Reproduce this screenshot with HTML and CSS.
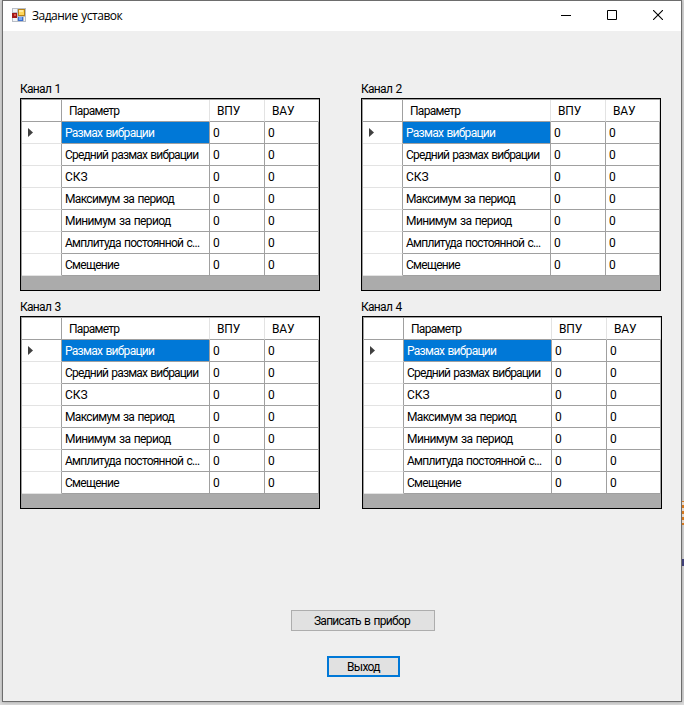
FILE: index.html
```
<!DOCTYPE html>
<html lang="ru">
<head>
<meta charset="utf-8">
<title>Задание уставок</title>
<link rel="stylesheet" href="styles.css">
</head>
<body>
<div class="window">
  <header class="titlebar">
    <svg class="app-icon" width="14" height="14" viewBox="0 0 14 14" shape-rendering="crispEdges">
      <path fill="#b9bec6" d="M0 0h14v14H0z"/>
      <path fill="#f2f4f7" d="M1 1h4v3H1zM1 10h4v3H1zM12 9h1v4h-1z"/>
      <path fill="#a01818" d="M0 5h5v5H0z"/><path fill="#e05a4a" d="M2 6h2v2H2z"/>
      <path fill="#b58218" d="M6 1h7v7H6z"/><path fill="#ffd65a" d="M7 2h5v5H7z"/><path fill="#ffeaa0" d="M7 2h4v2H7z"/>
      <path fill="#3a6fd0" d="M6 9h5v4H6z"/><path fill="#78a8f5" d="M7 9h3v3H7z"/>
    </svg>
    <h1 class="title">Задание уставок</h1>
    <div class="controls">
      <svg width="10" height="10" viewBox="0 0 10 10" shape-rendering="crispEdges"><path d="M0 5h10v1H0z"/></svg>
      <svg width="10" height="10" viewBox="0 0 10 10" fill="none" stroke="#000"><path d="M.5 .5h9v9h-9z"/></svg>
      <svg width="10" height="10" viewBox="0 0 10 10" fill="none" stroke="#000" stroke-width="1.1"><path d="M0 0l10 10M10 0L0 10"/></svg>
    </div>
  </header>
  <main class="client">
    <div class="channels" id="channels"></div>
    <div class="actions">
      <button class="btn write">Записать в прибор</button>
      <button class="btn exit">Выход</button>
    </div>
  </main>
</div>
<div class="backdrop-edge"><i class="orange"></i><i class="navy"></i></div>
<script src="app.js"></script>
</body>
</html>
```
FILE: styles.css
```
* { box-sizing: border-box; }
body { margin: 0; width: 684px; height: 705px; overflow: hidden; position: relative; padding-left: 2px; background: #dcdcdc; font: 12px/14px Roboto, "Liberation Sans", sans-serif; letter-spacing: -.72px; word-spacing: 1px; color: #000; }
.window { width: 680px; height: 702px; background: #efefef; border: 1px solid #6d6d6d; box-shadow: 0 0 4px rgba(0,0,0,.3); position: relative; }
.titlebar { height: 30px; background: #fff; display: flex; align-items: center; padding: 0 18px 0 9px; }
.app-icon { margin-top: -2px; }
.title { margin: 0 0 0 6px; font: 12px/16px "Open Sans", sans-serif; letter-spacing: -.5px; }
.controls { margin-left: auto; display: flex; gap: 36px; margin-top: -2px; }
.controls svg { display: block; }
.client { padding: 51px 0 0 17px; }
.channels { display: grid; grid-template-columns: 341px 301px; grid-template-rows: 218px 218px; }
.label { margin: 0; height: 16px; font-size: 12px; font-weight: 400; line-height: 14px; letter-spacing: -.7px; }
.grid { width: 300px; height: 193px; background: #ababab; border: 1px solid #000; padding: 1px 0 0 1px; box-shadow: inset 1px 1px #a0a0a0; }
.shifted { margin-left: 1px; }
.row { display: grid; grid-template-columns: 40px 148px 55px 54px; height: 22px; }
.row > div { background: #fff; border-right: 1px solid #a0a0a0; border-bottom: 1px solid #a0a0a0; padding: 4px 0 0 3px; line-height: 15px; white-space: nowrap; overflow: hidden; }
.row > .rowhead { border-bottom-color: #e3e3e3; padding: 6px 0 0 6px; }
.row > .selected { background: #0078d7; color: #fff; }
.rowhead svg { display: block; }
.head > div { border-right-color: #e3e3e3; padding-left: 7px; }
.head > .limit { letter-spacing: -.2px; }
.head > .rowhead { border-right-color: #a0a0a0; border-bottom-color: #a0a0a0; }
.p1 { letter-spacing: -.82px; }
.p2 { letter-spacing: 0; }
.p3 { letter-spacing: -.68px; }
.p4 { letter-spacing: -.6px; }
.p5 { letter-spacing: -.74px; }
.actions { display: flex; flex-direction: column; margin-top: 92px; }
.btn { font: inherit; letter-spacing: -.7px; word-spacing: 1px; color: #000; background: #e1e1e1; border: 1px solid #adadad; padding: 1px 0 0; height: 21px; }
.write { width: 144px; margin-left: 271px; padding-right: 2px; }
.exit { width: 73px; margin: 25px 0 0 307px; border: 2px solid #0078d7; }
.backdrop-edge { position: absolute; left: 682px; top: 0; width: 2px; height: 705px; }
.orange, .navy { position: absolute; left: 0; width: 2px; }
.orange { top: 501px; height: 24px; border: solid #d5781e; border-width: 1px 0; background: repeating-linear-gradient(#e8d8c8 0 3px, #d5781e 3px 6px); }
.navy { top: 559px; height: 7px; background: #404078; }
```
FILE: app.js
```
const params = ['Размах вибрации', 'Средний размах вибрации', 'СКЗ', 'Максимум за период', 'Минимум за период', 'Амплитуда постоянной с...', 'Смещение'];
const arrow = '<svg width="5" height="9" viewBox="0 0 5 9"><path fill="#404040" d="M0 0L5 4.5L0 9z"/></svg>';
const rows = params.map((p, i) => `<div class="row"><div class="rowhead">${i ? '' : arrow}</div><div class="p${i}${i ? '' : ' selected'}">${p}</div><div>0</div><div>0</div></div>`).join('');
document.getElementById('channels').innerHTML = [1, 2, 3, 4].map(n =>
  `<section><h2 class="label">Канал ${n}</h2><div class="grid${n === 4 ? ' shifted' : ''}"><div class="row head"><div class="rowhead"></div><div>Параметр</div><div class="limit">ВПУ</div><div class="limit">ВАУ</div></div>${rows}</div></section>`).join('');
```
